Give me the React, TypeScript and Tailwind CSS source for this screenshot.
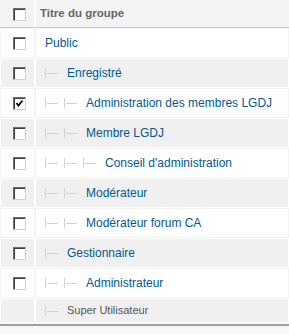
import React from "react";

type Row = { title: string; level: number; checked?: boolean; box?: boolean };

const rows: Row[] = [
  { title: "Public", level: 0, box: true },
  { title: "Enregistré", level: 1, box: true },
  { title: "Administration des membres LGDJ", level: 2, box: true, checked: true },
  { title: "Membre LGDJ", level: 2, box: true },
  { title: "Conseil d'administration", level: 3, box: true },
  { title: "Modérateur", level: 2, box: true },
  { title: "Modérateur forum CA", level: 2, box: true },
  { title: "Gestionnaire", level: 1, box: true },
  { title: "Administrateur", level: 2, box: true },
  { title: "Super Utilisateur", level: 1, box: false },
];

const Box = ({ checked }: { checked?: boolean }) => (
  <span className="relative inline-block w-[13px] h-[13px] bg-white border border-t-[#6f6f6f] border-l-[#6f6f6f] border-r-[#d4d0c8] border-b-[#d4d0c8] shadow-[inset_1px_1px_0_#404040]">
    {checked && (
      <svg className="absolute left-[1px] top-[1px]" width="9" height="9" viewBox="0 0 9 9">
        <path d="M1.5 4 L3.5 6.5 L7.5 1.5" stroke="#000" strokeWidth="1.8" fill="none" />
      </svg>
    )}
  </span>
);

const Branch = () => (
  <span className="relative inline-block w-[13px] h-[10px] border-l border-[#d2d2d2] mr-[6px] align-middle">
    <span className="absolute left-[1px] top-[5px] w-[11px] h-px bg-[#d2d2d2]" />
  </span>
);

export default function App() {
  return (
    <div className="w-[289px] h-[334px] bg-[#f7f7f7]" style={{ fontFamily: '"Liberation Sans", Arial, sans-serif' }}>
      <table className="w-full border-separate border-spacing-0 bg-white">
        <thead>
          <tr>
            <th className="w-[35px] h-[28px] bg-[#f4f4f4] border-r border-r-white border-b border-b-[#c8c8c8] text-left pl-[13px]">
              <span className="flex items-center pt-px">
                <Box />
              </span>
            </th>
            <th className="h-[28px] bg-[#f4f4f4] border-l border-l-white border-b border-b-[#c8c8c8] text-left pl-[4px] text-[11.5px] font-bold text-[#666]">
              Titre du groupe
            </th>
          </tr>
        </thead>
        <tbody>
          {rows.map((r, i) => {
            const gray = i % 2 === 1;
            const cell = gray
              ? "bg-[#f0f0f0] border border-white"
              : "bg-white border border-[#f3f3f3]";
            return (
              <tr key={i}>
                <td className={`${cell} ${r.box ? "h-[30px]" : "h-[25px]"} w-[35px] pl-[12px]`}>
                  {r.box && (
                    <span className="flex items-center">
                      <Box checked={r.checked} />
                    </span>
                  )}
                </td>
                <td className={`${cell} pl-[9px]`}>
                  <span className="flex items-center">
                    {Array.from({ length: r.level }).map((_, k) => (
                      <Branch key={k} />
                    ))}
                    <span
                      className={
                        r.box
                          ? "text-[12px] text-[#025a8d] " + (r.level > 0 ? "ml-[3px]" : "")
                          : "text-[11px] text-[#555] ml-[3px]"
                      }
                    >
                      {r.title}
                    </span>
                  </span>
                </td>
              </tr>
            );
          })}
        </tbody>
      </table>
      <div className="h-[2px] bg-[#a0a0a0] mt-px" />
    </div>
  );
}
